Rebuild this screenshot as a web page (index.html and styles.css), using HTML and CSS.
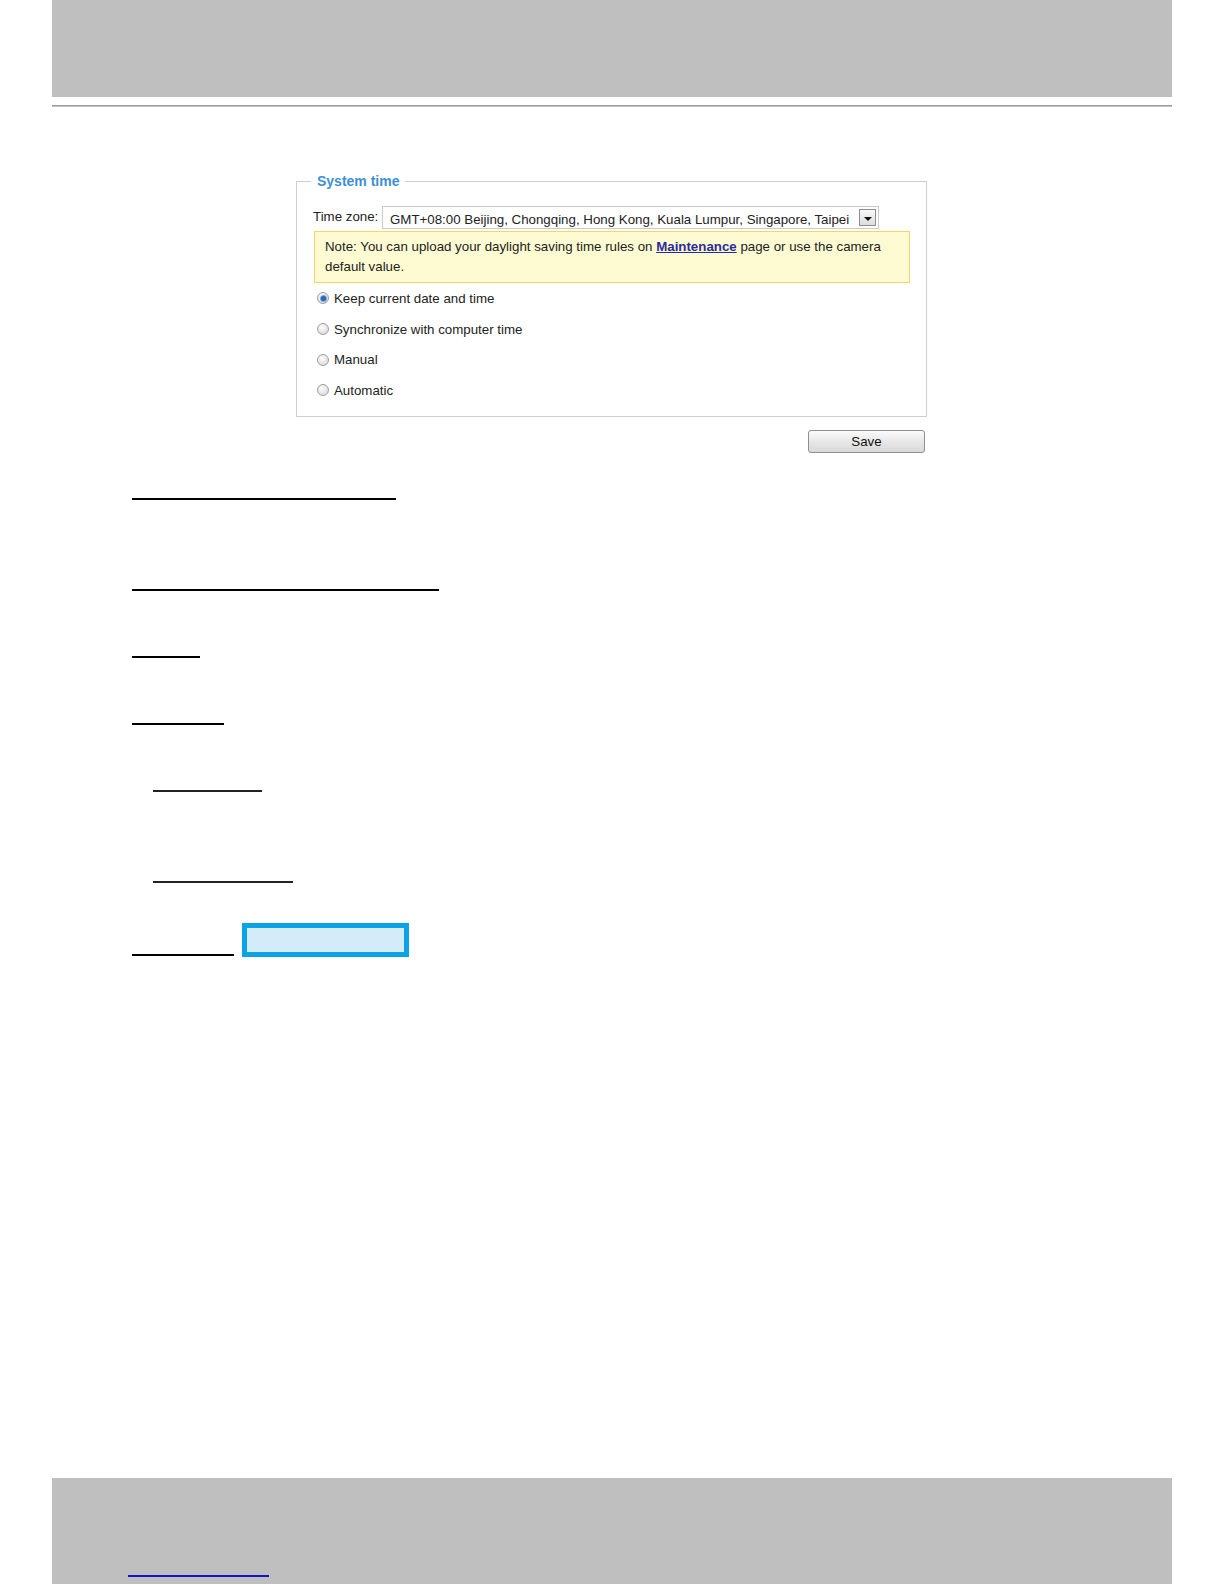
FILE: index.html
```html
<!DOCTYPE html>
<html>

<head>
	<meta charset="utf-8" />
	<title>System time</title>
	<link rel="stylesheet" href="styles.css">
</head>

<body>
	<div class="page">
		<div class="band"></div>
		<div class="rule"></div>

		<div class="panel">
			<fieldset class="box">
				<legend>System time</legend>
				<div class="tz">
					<span class="lbl">Time zone:</span>
					<div class="sel">
						<span class="val">GMT+08:00 Beijing, Chongqing, Hong Kong, Kuala Lumpur, Singapore, Taipei</span>
						<span class="arw"><i></i></span>
					</div>
				</div>
				<p class="note">Note: You can upload your daylight saving time rules on <a href="#">Maintenance</a> page or use the camera default value.</p>
				<label class="opt"><span class="rd on"></span>Keep current date and time</label>
				<label class="opt"><span class="rd"></span>Synchronize with computer time</label>
				<label class="opt"><span class="rd"></span>Manual</label>
				<label class="opt"><span class="rd"></span>Automatic</label>
			</fieldset>
			<div class="bar"><button>Save</button></div>
		</div>

		<div class="ul first" style="width:264px"></div>
		<div class="ul tall" style="width:307px"></div>
		<div class="ul" style="width:68px"></div>
		<div class="ul" style="width:92px"></div>
		<div class="ul sub thin" style="width:109px"></div>
		<div class="ul sub thin tall" style="width:140px"></div>
		<div class="last">
			<div class="ul" style="width:102px"></div>
			<div class="hl"></div>
		</div>

		<div class="foot">
			<div class="flink"></div>
		</div>
	</div>
</body>

</html>
```

FILE: styles.css
```css
body {
	margin:0;
	font-family:"Liberation Sans", Arial, sans-serif;
	font-size:13.3px;
	color:#222;
	background:#fff;
}

.page {
	min-height:1584px;
	padding:0 52px;
	display:flex;
	flex-direction:column;
	box-sizing:border-box;
}

.band {
	height:97px;
	background:#bfbfbf;
}

.rule {
	height:1px;
	margin-top:8px;
	background:#999;
	border-bottom:1px solid #c4c4c4;
}

.panel {
	width:631px;
	margin:0 0 0 244px;
}

.box {
	margin:66px 0 0 0;
	padding:0 16px 10px 16px;
	border:1px solid #cfcfcf;
	min-width:0;
}

.box legend {
	margin-left:-2px;
	padding:0 6px;
	font-size:14px;
	font-weight:bold;
	color:#3d8fd6;
	line-height:17px;
}

.tz {
	display:flex;
	align-items:center;
	margin-top:16px;
}

.lbl {
	width:69px;
	position:relative;
	top:-1px;
}

.sel {
	width:497px;
	height:23px;
	border:1px solid #c9c9c9;
	box-sizing:border-box;
	display:flex;
	align-items:center;
	justify-content:space-between;
	padding:0 2px 0 7px;
	overflow:hidden;
}

.val {
	position:relative;
	top:2px;
	white-space:nowrap;
}

.arw {
	width:17px;
	height:17px;
	box-sizing:border-box;
	border:1px solid #8d8d8d;
	background:linear-gradient(#fafafa,#dcdcdc);
	display:flex;
	align-items:center;
	justify-content:center;
}

.arw i {
	width:0;
	height:0;
	border-left:4px solid transparent;
	border-right:4px solid transparent;
	border-top:4px solid #111;
	margin-top:2px;
}

.note {
	margin:2px 0 0 1px;
	padding:5px 8px 5px 10px;
	background:#fefbd2;
	border:1px solid #efd76a;
	line-height:20px;
}

.note a {
	color:#2a2a9a;
	font-weight:bold;
}

.opt {
	display:flex;
	align-items:center;
	height:30.7px;
	padding-left:4px;
}

.rd {
	width:12px;
	height:12px;
	box-sizing:border-box;
	border-radius:50%;
	border:1px solid #a0a0a0;
	background:radial-gradient(circle at 40% 35%, #fdfdfd, #d2d2d2);
	margin-right:5px;
	display:flex;
	align-items:center;
	justify-content:center;
}

.rd.on::after {
	content:"";
	width:5px;
	height:5px;
	border-radius:50%;
	background:#2c66b8;
	box-shadow:0 0 0 1px #7fa6d8;
}

.bar {
	display:flex;
	justify-content:flex-end;
	margin-top:13px;
	padding-right:2px;
}

.bar button {
	width:117px;
	height:23px;
	border:1px solid #8f8f8f;
	border-radius:3px;
	background:linear-gradient(#fbfbfb,#e6e6e6 55%,#d9d9d9);
	font-family:"Liberation Sans", Arial, sans-serif;
	font-size:13.3px;
	color:#111;
	padding:0;
}

.ul {
	height:0;
	border-bottom:2px solid #000;
	margin:65px 0 0 80px;
}

.ul.first {
	margin-top:45px;
}

.ul.tall {
	margin-top:89px;
}

.ul.sub {
	margin-left:101px;
}

.ul.thin {
	border-bottom:2px solid #222;
}

.last {
	display:flex;
	align-items:flex-end;
	margin-top:40px;
}

.last .ul {
	margin:0 8px 1px 80px;
}

.hl {
	width:167px;
	height:34px;
	box-sizing:border-box;
	border:5px solid #0ba2e6;
	background:#d4ecfa;
}

.foot {
	margin-top:auto;
	height:106px;
	background:#bfbfbf;
	padding-top:97px;
	box-sizing:border-box;
}

.flink {
	width:141px;
	height:2px;
	margin-left:76px;
	background:#1515c8;
}
```
